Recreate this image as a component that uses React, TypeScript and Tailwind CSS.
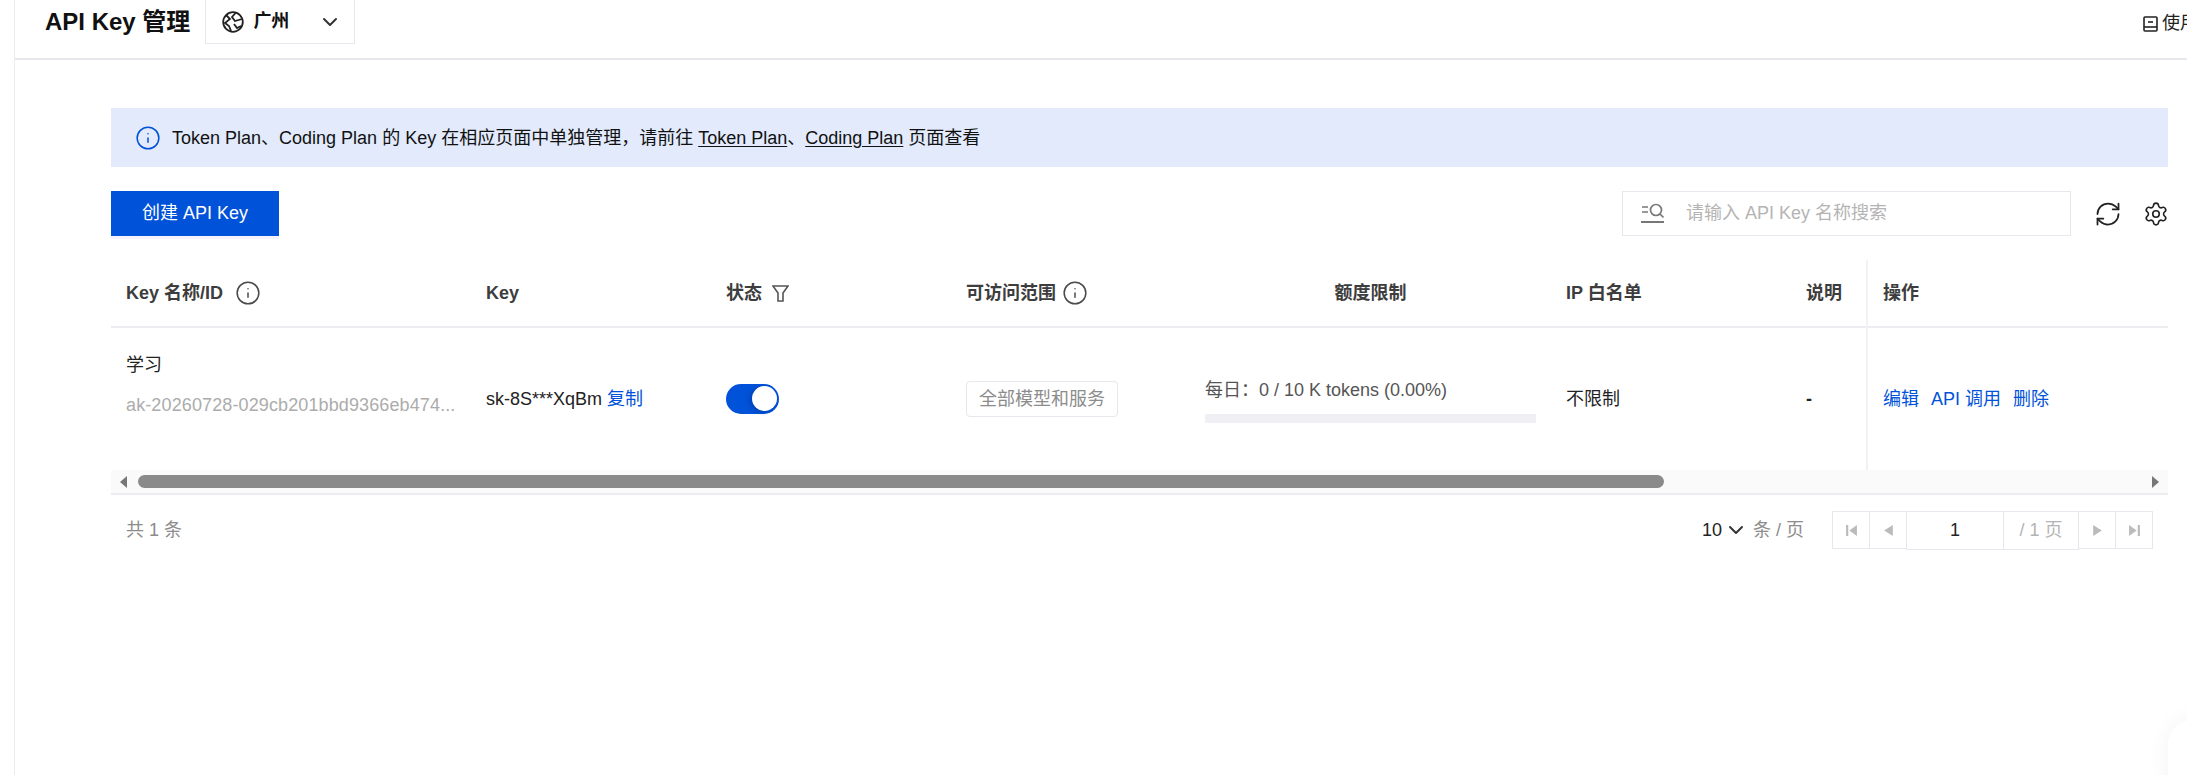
import { ChevronDown, Info, RefreshCw, Settings } from 'lucide-react'

function HeadInfo() {
  return <Info size={26} strokeWidth={1.4} className="text-[#4b4b4b]" />
}

function FilterIcon() {
  return (
    <svg width="17" height="17" viewBox="0 0 17 17" fill="none" stroke="#555" strokeWidth="1.6">
      <path d="M1 1 H16 L11 8 V16 H6 V8 Z" />
    </svg>
  )
}

function GlobeIcon() {
  return (
    <svg width="22" height="22" viewBox="0 0 22 22" fill="none" stroke="#222" strokeWidth="1.8">
      <circle cx="11" cy="11" r="9.8" />
      <path d="M4 4 L8 8 L3 12 L7 15 L9 20" />
      <path d="M14 1.5 L10 6 L13 10 L20 8" />
      <path d="M12 13 L15 17 L19 15" />
    </svg>
  )
}

function BookIcon() {
  return (
    <svg width="15" height="16" viewBox="0 0 15 16" fill="none" stroke="#222" strokeWidth="1.6">
      <rect x="1" y="1" width="13" height="14" rx="1" />
      <path d="M1 11 H14" />
      <path d="M5 6 H10" />
    </svg>
  )
}

function SearchIcon() {
  return (
    <svg width="24" height="22" viewBox="0 0 24 22" fill="none" stroke="#777" strokeWidth="1.7">
      <path d="M1 4 H7 M1 9 H7" />
      <circle cx="15" cy="7" r="5.5" />
      <path d="M19 11 L22.5 14.5" />
      <path d="M0 19 H23" strokeWidth="2" />
    </svg>
  )
}

function PageBtn({ kind }: { kind: 'first' | 'prev' | 'next' | 'last' }) {
  return (
    <button className="w-[38px] h-[38px] flex items-center justify-center border border-[#e7e7ee] -ml-px first:ml-0 bg-white">
      <svg width="13" height="13" viewBox="0 0 12 12" fill="#bbb">
        {kind === 'first' && <path d="M1 1 H3 V11 H1 Z M11 1 V11 L4 6 Z" />}
        {kind === 'prev' && <path d="M10 1 V11 L2 6 Z" />}
        {kind === 'next' && <path d="M2 1 V11 L10 6 Z" />}
        {kind === 'last' && <path d="M1 1 V11 L8 6 Z M9 1 H11 V11 H9 Z" />}
      </svg>
    </button>
  )
}

export default function App() {
  return (
    <div className="relative w-[2187px] h-[775px] overflow-hidden bg-white pl-[14px] font-['Liberation_Sans','Noto_Sans_CJK_SC',sans-serif] text-[18px] text-[#222]">
      <div className="h-full border-l border-[#ececf0]">
        <header className="h-[60px] border-b-2 border-[#e7e7ee] flex items-start relative">
          <h1 className="ml-[30px] mt-[8px] text-[24px] leading-[28px] font-bold text-[#111] whitespace-nowrap">API Key 管理</h1>
          <div className="ml-[15px] w-[150px] h-[44px] border-x border-b border-[#e7e7ee] flex items-center pl-[16px] pr-[12px]">
            <GlobeIcon />
            <span className="ml-[9px] font-bold text-[18px] text-[#111]">广州</span>
            <ChevronDown size={24} strokeWidth={2} className="ml-auto text-[#333]" />
          </div>
          <div className="absolute left-[2128px] top-[10px] flex items-center gap-[4px] whitespace-nowrap">
            <BookIcon />
            <span className="text-[18px]">使用指南</span>
          </div>
        </header>

        <main className="pl-[96px] pr-[4px] pt-[48px] w-[2157px]">
          <div className="h-[59px] bg-[#e2eafc] flex items-center pl-[24px] text-[18px] text-[#111]">
            <Info size={26} strokeWidth={1.4} className="text-[#0052d9] mr-[11px]" />
            <span className="pt-[2px]">
              Token Plan、Coding Plan 的 Key 在相应页面中单独管理，请前往{' '}
              <a className="underline underline-offset-2">Token Plan</a>、<a className="underline underline-offset-2">Coding Plan</a> 页面查看
            </span>
          </div>

          <div className="flex items-center mt-[24px] h-[45px] -mr-px">
            <button className="w-[168px] h-[45px] bg-[#0052d9] text-white text-[18px] shadow-[0_3px_0_#f2f4f9]">创建 API Key</button>
            <div className="ml-auto w-[449px] h-[45px] border border-[#e7e7ee] flex items-center pl-[18px]">
              <SearchIcon />
              <span className="ml-[21px] text-[#b4b4b4]">请输入 API Key 名称搜索</span>
            </div>
            <button className="ml-[23px]"><RefreshCw size={28} strokeWidth={1.5} className="text-[#222]" /></button>
            <button className="ml-[21px]"><Settings size={26} strokeWidth={1.5} className="text-[#222]" /></button>
          </div>

          <table className="mt-[24px] w-full table-fixed border-collapse">
            <colgroup>
              <col className="w-[360px]" />
              <col className="w-[240px]" />
              <col className="w-[240px]" />
              <col className="w-[239px]" />
              <col className="w-[361px]" />
              <col className="w-[240px]" />
              <col className="w-[76px]" />
              <col />
            </colgroup>
            <thead>
              <tr className="h-[67px] border-b-2 border-[#ececf1] text-left text-[#3d3d3d]">
                <th className="px-[15px] font-bold"><span className="flex items-center gap-[12px]">Key 名称/ID <HeadInfo /></span></th>
                <th className="px-[15px] font-bold">Key</th>
                <th className="px-[15px] font-bold">
                  <span className="flex items-center gap-[10px]">状态 <FilterIcon /></span>
                </th>
                <th className="px-[15px] font-bold"><span className="flex items-center gap-[6px]">可访问范围 <HeadInfo /></span></th>
                <th className="px-[15px] font-bold text-center">额度限制</th>
                <th className="px-[15px] font-bold">IP 白名单</th>
                <th className="px-[15px] font-bold whitespace-nowrap">说明</th>
                <th className="px-[15px] font-bold border-l-2 border-[#f2f2f5]">操作</th>
              </tr>
            </thead>
            <tbody>
              <tr className="h-[143px]">
                <td className="px-[15px] pb-[28px]">
                  <div className="leading-[24px] mb-[16px]">学习</div>
                  <div className="leading-[24px] text-[#acacac] whitespace-nowrap tracking-[0.12px]">ak-20260728-029cb201bbd9366eb474...</div>
                </td>
                <td className="px-[15px] whitespace-nowrap">
                  sk-8S***XqBm <a className="text-[#0052d9]">复制</a>
                </td>
                <td className="px-[15px]">
                  <div className="w-[53px] h-[30px] rounded-full bg-[#0052d9] relative">
                    <span className="absolute right-[2px] top-[2px] w-[25px] h-[25px] rounded-full bg-white shadow-[-2px_1px_4px_rgba(0,40,120,0.4)]" />
                  </div>
                </td>
                <td className="px-[15px]">
                  <span className="inline-flex items-center h-[36px] px-[12px] border border-[#e7e7ee] rounded-[4px] text-[#8c8c8c] whitespace-nowrap">全部模型和服务</span>
                </td>
                <td className="px-[15px] pt-[3px]">
                  <div className="text-[#555] whitespace-nowrap leading-[24px]">每日：0 / 10 K tokens (0.00%)</div>
                  <div className="mt-[12px] h-[9px] bg-[#f0f0f4]" />
                </td>
                <td className="px-[15px]">不限制</td>
                <td className="px-[15px] font-bold">-</td>
                <td className="px-[15px] border-l-2 border-[#f2f2f5] whitespace-nowrap text-[#0052d9]">
                  <a>编辑</a>
                  <a className="ml-[12px]">API 调用</a>
                  <a className="ml-[12px]">删除</a>
                </td>
              </tr>
            </tbody>
          </table>

          <div className="h-[23px] bg-[#fafafa] flex items-center px-[8px] border-b-2 border-[#ececf1] box-content">
            <svg width="10" height="12" viewBox="0 0 10 12" fill="#777"><path d="M8 0 V12 L1 6 Z" /></svg>
            <div className="ml-[9px] w-[1526px] h-[13px] rounded-full bg-[#8a8a8a]" />
            <svg className="ml-auto" width="10" height="12" viewBox="0 0 10 12" fill="#777"><path d="M2 0 V12 L9 6 Z" /></svg>
          </div>

          <div className="flex items-center h-[70px] pl-[15px] pr-[15px]">
            <span className="text-[#8c8c8c]">共 1 条</span>
            <span className="ml-auto text-[#222]">10</span>
            <ChevronDown size={24} strokeWidth={2} className="ml-[2px] text-[#333]" />
            <span className="ml-[5px] text-[#8c8c8c] whitespace-nowrap">条 / 页</span>
            <div className="ml-[28px] flex items-center">
              <PageBtn kind="first" />
              <PageBtn kind="prev" />
              <div className="-ml-px h-[39px] flex border border-[#e7e7ee] mt-px">
                <span className="w-[96px] flex items-center justify-center text-[#222]">1</span>
                <span className="w-[75px] border-l border-[#e7e7ee] flex items-center justify-center text-[#b4b4b4] whitespace-nowrap">/ 1 页</span>
              </div>
              <PageBtn kind="next" />
              <PageBtn kind="last" />
            </div>
          </div>
        </main>
      </div>
      <div className="absolute left-[2168px] top-[720px] w-[60px] h-[90px] rounded-[24px] bg-white shadow-[0_0_24px_rgba(0,0,0,0.05)]" />
    </div>
  )
}
